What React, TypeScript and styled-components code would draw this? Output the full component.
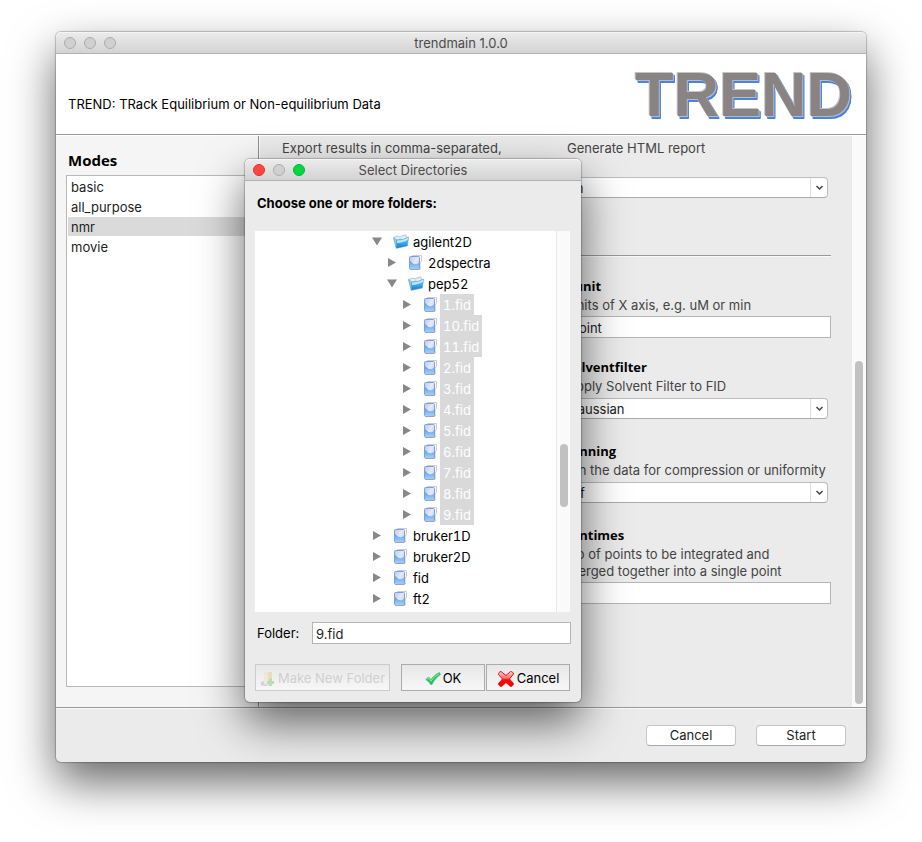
import React, { useState } from "react";
import styled, { createGlobalStyle, css } from "styled-components";

const GlobalStyle = createGlobalStyle`
  *, *::before, *::after { box-sizing: border-box; }
  body {
    margin: 0;
    background: #fff;
    color: #000;
    font-family: Inter, "Liberation Sans", sans-serif;
    font-size: 13px;
    line-height: 17px;
  }
  button, input, select { font: inherit; color: inherit; margin: 0; }
`;

const Desktop = styled.div`
  display: flex;
  min-height: 100vh;
  padding: 32px 56px 80px;
`;

const windowFrame = css`
  display: flex;
  flex-direction: column;
  background: #ebebeb;
  border-radius: 5px;
  box-shadow: 0 0 1px 1px rgba(0, 0, 0, 0.22), 0 20px 46px rgba(0, 0, 0, 0.6);
`;

const MainWindow = styled.main`
  ${windowFrame}
  position: relative;
  flex: 1;
  min-width: 0;
`;

const Dialog = styled.section`
  ${windowFrame}
  position: absolute;
  left: 189px;
  top: 127px;
  width: 336px;
`;

const TitleBar = styled.header`
  display: grid;
  grid-template-columns: 1fr auto 1fr;
  align-items: center;
  height: 22px;
  padding: 1px 8px 0;
  border-bottom: 1px solid #b1b1b1;
  border-radius: 5px 5px 0 0;
  background: linear-gradient(#ececec, #d3d3d3);
  box-shadow: inset 0 1px 0 #f5f5f5;
`;

const TitleText = styled.h1`
  margin: 0;
  font-size: 13px;
  font-weight: 400;
  line-height: 18px;
  color: #4b4b4b;
`;

const Lights = styled.div`
  display: flex;
  gap: 8px;
`;

const Light = styled.button<{ $fill: string; $rim: string }>`
  width: 12px;
  height: 12px;
  padding: 0;
  border: 1px solid ${(p) => p.$rim};
  border-radius: 50%;
  background: ${(p) => p.$fill};
`;

const Banner = styled.div`
  display: flex;
  align-items: center;
  justify-content: space-between;
  height: 81px;
  padding: 0 14px 0 12px;
  border-bottom: 1px solid #999;
  background: #fff;
`;

const Tagline = styled.p`
  margin: 20px 0 0;
`;

const Logo = styled.div`
  font-family: "Liberation Sans", sans-serif;
  font-size: 63px;
  font-weight: 700;
  line-height: 80px;
  color: #8a8383;
  text-shadow: -1px -1px 0 #c4c4c4, 1px 1px 0 #b4bccb, 2px 2px 0 #4a82dc, 2px 3px 0 #4a82dc;
`;

const Body = styled.div`
  display: grid;
  grid-template-columns: 202px 1fr;
  flex: 1;
  border-top: 1px solid #fff;
  border-bottom: 1px solid #999;
`;

const Sidebar = styled.nav`
  display: flex;
  flex-direction: column;
  padding: 14px 10px 20px;
  background: #f5f5f5;
`;

const SidebarTitle = styled.h2`
  margin: 0 2px 4px;
  font-family: "Open Sans", sans-serif;
  font-size: 15px;
  font-weight: 700;
  line-height: 21px;
`;

const ModeList = styled.div`
  display: flex;
  flex: 1;
  flex-direction: column;
  gap: 1px;
  padding: 1px;
  border: 1px solid #b9b9b9;
  background: #fff;
`;

const Mode = styled.button<{ $active: boolean }>`
  height: 19px;
  padding: 2px 3px 0;
  border: 0;
  background: ${(p) => (p.$active ? "#dadada" : "transparent")};
  color: #222;
  line-height: 17px;
  text-align: left;
`;

const Content = styled.div`
  display: grid;
  grid-template-columns: 1fr 15px;
  min-width: 0;
  border-left: 1px solid #8f8f8f;
  box-shadow: inset 1px 0 0 #fafafa;
`;

const Settings = styled.form`
  min-width: 0;
  padding: 0 20px 0 23px;
`;

const SettingsGroup = styled.div<{ $first?: boolean }>`
  display: grid;
  grid-template-columns: 1fr 1fr;
  column-gap: 21px;
  ${(p) =>
    p.$first
      ? "padding: 4px 0 35px;"
      : "padding-top: 20px; border-top: 1px solid #999; box-shadow: inset 0 1px 0 #fafafa;"}
`;

const Column = styled.div<{ $second?: boolean }>`
  display: flex;
  flex-direction: column;
  min-width: 0;
  grid-column: ${(p) => (p.$second ? 2 : 1)};
`;

const FieldBox = styled.div`
  display: flex;
  flex-direction: column;
  margin-bottom: 19px;
`;

const FieldTitle = styled.label`
  font-family: "Open Sans", sans-serif;
  font-weight: 700;
  line-height: 21px;
`;

const Description = styled.p<{ $lines: number }>`
  min-height: ${(p) => p.$lines * 17}px;
  margin: 0 0 2px;
  color: #444;
  white-space: pre-line;
`;

const TextField = styled.input`
  width: 100%;
  height: 22px;
  padding: 2px 3px 0;
  border: 1px solid #b5b5b5;
  border-radius: 0;
  background: #fff;
  color: #222;
`;

const Combo = styled.div`
  display: flex;
  height: 21px;
  margin: 1px 3px 3px 0;
  border: 1px solid #bcbcbc;
  border-bottom-color: #ababab;
  border-radius: 4px;
  background: #fff;
`;

const Select = styled.select`
  appearance: none;
  flex: 1;
  min-width: 0;
  padding: 1px 0 0;
  border: 0;
  background: transparent;
  color: #222;
`;

const ComboArrow = styled.span`
  display: grid;
  place-items: center;
  width: 17px;
  border-left: 1px solid #ddd;
`;

const Track = styled.div<{ $start: number }>`
  display: flex;
  justify-content: center;
  padding-top: ${(p) => p.$start}px;
  border-left: 1px solid #e9e9e9;
  background: #fafafa;
`;

const Thumb = styled.div<{ $length: number }>`
  width: 8px;
  height: ${(p) => p.$length}px;
  border-radius: 4px;
  background: #c1c1c1;
`;

const Footer = styled.footer`
  display: flex;
  justify-content: flex-end;
  gap: 20px;
  padding: 16px 20px;
  border-top: 1px solid #fafafa;
`;

const PushButton = styled.button`
  width: 90px;
  height: 21px;
  padding: 0;
  border: 1px solid #c6c6c6;
  border-bottom-color: #a9a9a9;
  border-radius: 4px;
  background: #fff;
  color: #222;
`;

const DialogBody = styled.div`
  display: flex;
  flex-direction: column;
  padding: 14px 10px 11px;
`;

const Prompt = styled.h2`
  margin: 0 2px 19px;
  font-size: 13px;
  font-weight: 700;
  line-height: 17px;
`;

const TreePane = styled.div`
  display: grid;
  grid-template-columns: 1fr 14px;
  height: 381px;
  margin-right: 1px;
  background: #fff;
`;

const Tree = styled.ul`
  margin: 0;
  padding: 0;
  list-style: none;
  font-variant-numeric: tabular-nums;
`;

const TreeRow = styled.li<{ $level: number }>`
  display: flex;
  align-items: center;
  height: 21px;
  padding-left: ${(p) => 116 + p.$level * 15}px;
`;

const Toggle = styled.button`
  display: grid;
  place-items: center;
  width: 12px;
  height: 21px;
  margin-right: 10px;
  padding: 0;
  border: 0;
  background: transparent;
`;

const TreeLabel = styled.span<{ $selected: boolean }>`
  height: 21px;
  margin-left: 1px;
  padding: 0 3px;
  line-height: 23px;
  background: ${(p) => (p.$selected ? "#d9d9d9" : "transparent")};
  color: ${(p) => (p.$selected ? "#fff" : "#000")};
`;

const FolderRow = styled.div`
  display: grid;
  grid-template-columns: 55px 1fr;
  align-items: center;
  margin: 10px 0 20px 2px;
`;

const Actions = styled.div`
  display: grid;
  grid-template-columns: 135px 1fr;
  column-gap: 11px;
  margin-right: 1px;
`;

const PairedActions = styled.div`
  display: grid;
  grid-template-columns: 1fr 1fr;
  gap: 1px;
`;

const FlatButton = styled.button`
  display: flex;
  align-items: center;
  justify-content: center;
  gap: 2px;
  height: 27px;
  padding: 2px 0 0;
  border: 1px solid #ababab;
  background: linear-gradient(#e7e7e7, #f7f7f7);
  white-space: nowrap;

  &:disabled {
    border-color: #cbcbcb;
    color: #cfcfcf;
  }
`;

const ClosedArrow = () => (
  <svg width="12" height="12" viewBox="0 0 12 12" aria-hidden="true">
    <path d="M2 1 10 5.500 2 10Z" fill="#888" />
  </svg>
);

const OpenArrow = () => (
  <svg width="12" height="12" viewBox="0 0 12 12" aria-hidden="true">
    <path d="M1 1.500H11L6 9.500Z" fill="#888" />
  </svg>
);

const FolderIcon = () => (
  <svg width="16" height="16" viewBox="0 0 16 16" aria-hidden="true">
    <defs>
      <linearGradient id="folderFront" x1="0" y1="0" x2="0" y2="1">
        <stop offset="0" stopColor="#b5e4fa" />
        <stop offset=".4" stopColor="#51b4ee" />
        <stop offset="1" stopColor="#0f74c8" />
      </linearGradient>
    </defs>
    <path d="M.5 3.500 5 2 6 3 12.500 .8 14 3.500 3 13Z" fill="#e3eef5" stroke="#9bb4c2" strokeWidth=".7" />
    <path d="M.5 3.500 3 14 4 14 4 6Z" fill="#8fc9e8" stroke="#6aa9cc" strokeWidth=".5" />
    <path d="M3.500 6 8 5 9.500 5.500 15.700 3 14.300 12 3.500 14.300Z" fill="url(#folderFront)" stroke="#3d9cd9" strokeWidth=".5" />
    <path d="M4 9C8 9 12 7.500 15 5.500L15.300 4 9.500 6 4 6.600Z" fill="#d5f1fd" opacity=".8" />
  </svg>
);

const DriveIcon = () => (
  <svg width="16" height="16" viewBox="0 0 16 16" aria-hidden="true">
    <defs>
      <linearGradient id="driveFace" x1="0" y1="0" x2="1" y2=".6">
        <stop offset="0" stopColor="#b9c6f2" />
        <stop offset=".6" stopColor="#e6e9ff" />
        <stop offset="1" stopColor="#c3d3f8" />
      </linearGradient>
      <linearGradient id="driveWave" x1="0" y1="0" x2="0" y2="1">
        <stop offset="0" stopColor="#5d9ce6" />
        <stop offset="1" stopColor="#9dd0fa" />
      </linearGradient>
    </defs>
    <path d="M4.500 1.500V.5H13.500V6.500L12 8V13" fill="#fbfbfb" stroke="#cccccc" />
    <rect x="1.500" y="1.500" width="10" height="12.500" rx="1" fill="url(#driveFace)" stroke="#7ba2d8" />
    <path d="M2 6C4 7 6 11.500 11 8V13.500H2Z" fill="url(#driveWave)" />
    <path d="M2 14.500H11.500L12.500 13" fill="none" stroke="#8f9cab" strokeWidth=".8" />
  </svg>
);

const ChevronIcon = () => (
  <svg width="9" height="7" viewBox="0 0 9 7" aria-hidden="true">
    <path d="M1.500 2 4.500 5 7.500 2" fill="none" stroke="#444" strokeWidth="1.500" />
  </svg>
);

const CheckIcon = () => (
  <svg width="16" height="16" viewBox="0 0 16 16" aria-hidden="true">
    <path d="M.8 8.500 3.500 6 6 8.500C8 5.500 11 3 14.500 1.500L15.500 3.500C12 6 9 9 7 13.500H5.500C4.500 11.500 3 10 .8 8.500Z" fill="#17c452" stroke="#75a886" strokeWidth=".7" />
    <path d="M2.200 8.200 3.500 7.200 6 10C8 6.800 11 4.200 14.200 2.700" fill="none" stroke="#6cec94" strokeWidth="1.200" />
  </svg>
);

const CrossIcon = () => (
  <svg width="18" height="18" viewBox="0 0 18 18" aria-hidden="true">
    <defs>
      <linearGradient id="crossFill" x1="0" y1="0" x2="0" y2="1">
        <stop offset="0" stopColor="#ffd0d0" />
        <stop offset=".45" stopColor="#ff6a6a" />
        <stop offset=".55" stopColor="#fb0808" />
        <stop offset="1" stopColor="#f80000" />
      </linearGradient>
    </defs>
    <path d="M4 1.500 9 5.500 13.500 1.500C15 1.500 16.500 2.500 16.500 4L12.500 9 16.500 13.500C16.500 15 15 16.500 13.500 16.500L9 12.500 4.500 16.500C3 16.500 1.500 15 1.500 13.500L5.500 9 1.500 4.500C1.500 3 2.500 1.500 4 1.500Z" fill="url(#crossFill)" stroke="#e01414" />
  </svg>
);

const NewFolderIcon = () => (
  <svg width="16" height="16" viewBox="0 0 16 16" opacity=".35" aria-hidden="true">
    <ellipse cx="5" cy="12.500" rx="4.500" ry="2.500" fill="#999" />
    <path d="M4 2 8 1V14L4 13Z" fill="#f2dcae" />
    <path d="M8 1H12V13L8 14Z" fill="#e9ba72" />
    <path d="M10.500 7.500V15M7 11.500H14" stroke="#55b84b" strokeWidth="3" />
  </svg>
);

type FieldProps = {
  id?: string;
  title?: string;
  description: string;
  lines?: number;
  children?: React.ReactNode;
};

const Field = ({ id, title, description, lines = 1, children }: FieldProps) => (
  <FieldBox>
    {title && <FieldTitle htmlFor={id}>{title}</FieldTitle>}
    <Description $lines={lines}>{description}</Description>
    {children}
  </FieldBox>
);

const ComboBox = ({ id, label, options }: { id: string; label?: string; options: string[] }) => (
  <Combo>
    <Select id={id} aria-label={label} defaultValue={options[0]}>
      {options.map((o) => (
        <option key={o}>{o}</option>
      ))}
    </Select>
    <ComboArrow>
      <ChevronIcon />
    </ComboArrow>
  </Combo>
);

const GRAY = ["#d0d0d0", "#adadad"];

const WindowLights = ({ colors }: { colors: string[][] }) => (
  <Lights>
    {["Close", "Minimize", "Zoom"].map((name, i) => (
      <Light key={name} type="button" aria-label={name} $fill={colors[i][0]} $rim={colors[i][1]} />
    ))}
  </Lights>
);

type Node = { name: string; level: number; open?: boolean };

const fids = ["1", "10", "11", "2", "3", "4", "5", "6", "7", "8", "9"];

const nodes: Node[] = [
  { name: "agilent2D", level: 0, open: true },
  { name: "2dspectra", level: 1 },
  { name: "pep52", level: 1, open: true },
  ...fids.map((n) => ({ name: `${n}.fid`, level: 2 })),
  { name: "bruker1D", level: 0 },
  { name: "bruker2D", level: 0 },
  { name: "fid", level: 0 },
  { name: "ft2", level: 0 },
];

const modes = ["basic", "all_purpose", "nmr", "movie"];

export default function App() {
  const [mode, setMode] = useState("nmr");
  const [folder, setFolder] = useState("9.fid");

  return (
    <>
      <GlobalStyle />
      <Desktop>
        <MainWindow>
          <TitleBar>
            <WindowLights colors={[GRAY, GRAY, GRAY]} />
            <TitleText>trendmain 1.0.0</TitleText>
          </TitleBar>
          <Banner>
            <Tagline>TREND: TRack Equilibrium or Non-equilibrium Data</Tagline>
            <Logo>TREND</Logo>
          </Banner>
          <Body>
            <Sidebar>
              <SidebarTitle>Modes</SidebarTitle>
              <ModeList>
                {modes.map((m) => (
                  <Mode key={m} type="button" $active={m === mode} onClick={() => setMode(m)}>
                    {m}
                  </Mode>
                ))}
              </ModeList>
            </Sidebar>
            <Content>
              <Settings>
                <SettingsGroup $first>
                  <Column>
                    <Field description="Export results in comma-separated," lines={2} />
                  </Column>
                  <Column $second>
                    <Field description="Generate HTML report" lines={2}>
                      <ComboBox id="report" label="Generate HTML report" options={["on", "off"]} />
                    </Field>
                  </Column>
                </SettingsGroup>
                <SettingsGroup>
                  <Column $second>
                    <Field id="xunit" title="xunit" description="Units of X axis, e.g. uM or min">
                      <TextField id="xunit" defaultValue="point" />
                    </Field>
                    <Field id="solventfilter" title="solventfilter" description="Apply Solvent Filter to FID">
                      <ComboBox id="solventfilter" options={["Gaussian"]} />
                    </Field>
                    <Field id="binning" title="binning" description="Bin the data for compression or uniformity">
                      <ComboBox id="binning" options={["off", "on"]} />
                    </Field>
                    <Field
                      id="bintimes"
                      title="bintimes"
                      description={"No of points to be integrated and\nmerged together into a single point"}
                      lines={2}
                    >
                      <TextField id="bintimes" />
                    </Field>
                  </Column>
                </SettingsGroup>
              </Settings>
              <Track $start={225}>
                <Thumb $length={343} />
              </Track>
            </Content>
          </Body>
          <Footer>
            <PushButton type="button">Cancel</PushButton>
            <PushButton type="button">Start</PushButton>
          </Footer>

          <Dialog role="dialog" aria-label="Select Directories">
            <TitleBar>
              <WindowLights colors={[["#ff4644", "#e2302e"], GRAY, ["#00d742", "#00b834"]]} />
              <TitleText>Select Directories</TitleText>
            </TitleBar>
            <DialogBody>
              <Prompt>Choose one or more folders:</Prompt>
              <TreePane>
                <Tree>
                  {nodes.map((n) => (
                    <TreeRow key={n.name} $level={n.level}>
                      <Toggle type="button" aria-label={`Toggle ${n.name}`} aria-expanded={!!n.open}>
                        {n.open ? <OpenArrow /> : <ClosedArrow />}
                      </Toggle>
                      {n.open ? <FolderIcon /> : <DriveIcon />}
                      <TreeLabel $selected={n.level === 2}>{n.name}</TreeLabel>
                    </TreeRow>
                  ))}
                </Tree>
                <Track $start={213}>
                  <Thumb $length={63} />
                </Track>
              </TreePane>
              <FolderRow>
                <label htmlFor="folder">Folder:</label>
                <TextField id="folder" value={folder} onChange={(e) => setFolder(e.target.value)} />
              </FolderRow>
              <Actions>
                <FlatButton type="button" disabled>
                  <NewFolderIcon />
                  Make New Folder
                </FlatButton>
                <PairedActions>
                  <FlatButton type="button">
                    <CheckIcon />
                    OK
                  </FlatButton>
                  <FlatButton type="button">
                    <CrossIcon />
                    Cancel
                  </FlatButton>
                </PairedActions>
              </Actions>
            </DialogBody>
          </Dialog>
        </MainWindow>
      </Desktop>
    </>
  );
}
